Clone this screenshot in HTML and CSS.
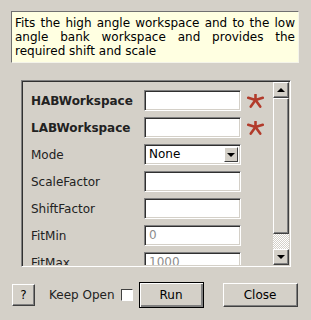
FILE: index.html
```html
<!DOCTYPE html>
<html lang="en">
<head>
    <meta charset="UTF-8">
    <title>Algorithm Dialog</title>
    <link rel="stylesheet" href="styles.css">
</head>
<body>

    <div class="desc">Fits the high angle workspace and to the low angle bank workspace and provides the required shift and scale</div>

    <div class="frame">
        <div class="props">
            <div class="row">
                <span class="label required">HABWorkspace</span>
                <div class="field"></div>
                <svg class="star" width="17" height="14" viewBox="0 0 17 14">
                    <g stroke="#b23b2b" stroke-width="2.6" stroke-linecap="round">
                        <line x1="8.5" y1="6" x2="8.5" y2="0.8"/>
                        <line x1="8.5" y1="6" x2="1.2" y2="3.8"/>
                        <line x1="8.5" y1="6" x2="15.8" y2="3.8"/>
                        <line x1="8.5" y1="6" x2="3.8" y2="12.6"/>
                        <line x1="8.5" y1="6" x2="13.2" y2="12.6"/>
                    </g>
                </svg>
            </div>
            <div class="row">
                <span class="label required">LABWorkspace</span>
                <div class="field"></div>
                <svg class="star" width="17" height="14" viewBox="0 0 17 14">
                    <g stroke="#b23b2b" stroke-width="2.6" stroke-linecap="round">
                        <line x1="8.5" y1="6" x2="8.5" y2="0.8"/>
                        <line x1="8.5" y1="6" x2="1.2" y2="3.8"/>
                        <line x1="8.5" y1="6" x2="15.8" y2="3.8"/>
                        <line x1="8.5" y1="6" x2="3.8" y2="12.6"/>
                        <line x1="8.5" y1="6" x2="13.2" y2="12.6"/>
                    </g>
                </svg>
            </div>
            <div class="row">
                <span class="label">Mode</span>
                <div class="field combo">
                    <span>None</span>
                    <span class="combo-btn"><span class="arrow-down"></span></span>
                </div>
            </div>
            <div class="row">
                <span class="label">ScaleFactor</span>
                <div class="field"></div>
            </div>
            <div class="row">
                <span class="label">ShiftFactor</span>
                <div class="field"></div>
            </div>
            <div class="row">
                <span class="label">FitMin</span>
                <div class="field disabled">0</div>
            </div>
            <div class="row">
                <span class="label">FitMax</span>
                <div class="field disabled">1000</div>
            </div>
            <div class="row">
                <span class="label">OutputWorkspace</span>
                <div class="field"></div>
            </div>
        </div>

        <div class="scrollbar">
            <div class="sb-btn"><span class="arrow-up"></span></div>
            <div class="sb-thumb"></div>
            <div class="sb-track"></div>
            <div class="sb-btn"><span class="arrow-down"></span></div>
        </div>
    </div>

    <div class="buttons">
        <div class="btn help">?</div>
        <span class="keep">Keep Open</span>
        <span class="check"></span>
        <div class="btn run">Run</div>
        <div class="btn close">Close</div>
    </div>

</body>
</html>
```

FILE: styles.css
```css
body {
    margin: 0;
    background-color: #d4d0c8;
    font-family: "DejaVu Sans", sans-serif;
    font-size: 12px;
    color: #000;
}

.desc {
    margin: 11px 12px 0 11px;
    padding: 4px 3px;
    height: 42px;
    line-height: 14px;
    background-color: #ffffe1;
    border: 1px solid;
    border-color: #707070 #f4f4ea #f4f4ea #707070;
    text-align: justify;
}

.frame {
    display: flex;
    margin: 17px 20px 0 21px;
    height: 183px;
    border-style: solid;
    border-width: 1px;
    border-color: #808080 #fff #fff #808080;
    box-shadow: inset 1px 1px #303030, inset -1px -1px #d4d0c8;
    padding: 1px;
}

.props {
    flex: 1;
    overflow: hidden;
    padding: 8px 0 0 8px;
}

.row {
    display: flex;
    align-items: center;
    height: 21px;
    margin-bottom: 6px;
}

.label {
    width: 113px;
    color: #222;
    white-space: nowrap;
}

.label.required {
    font-weight: bold;
}

.field {
    box-sizing: border-box;
    width: 97px;
    height: 21px;
    padding: 1px 4px 0;
    line-height: 17px;
    background-color: #fff;
    border-style: solid;
    border-width: 1px;
    border-color: #808080 #fff #fff #808080;
    box-shadow: inset 1px 1px #303030, inset -1px -1px #d4d0c8;
}

.field.disabled {
    color: #8c8c8c;
}

.combo {
    display: flex;
    justify-content: space-between;
    align-items: center;
    padding: 0 2px 0 4px;
}

.combo-btn {
    display: flex;
    align-items: center;
    justify-content: center;
    box-sizing: border-box;
    width: 14px;
    height: 15px;
    background-color: #d4d0c8;
    border: 1px solid;
    border-color: #fff #404040 #404040 #fff;
}

.arrow-down,
.arrow-up {
    width: 0;
    height: 0;
    border-left: 4px solid transparent;
    border-right: 4px solid transparent;
}

.arrow-down {
    border-top: 4px solid #000;
}

.arrow-up {
    border-bottom: 4px solid #000;
}

.star {
    margin-left: 6px;
    margin-top: 1px;
}

.scrollbar {
    display: flex;
    flex-direction: column;
    width: 16px;
}

.sb-btn,
.sb-thumb {
    box-sizing: border-box;
    background-color: #d4d0c8;
    border: 1px solid;
    border-color: #fff #404040 #404040 #fff;
    box-shadow: inset -1px -1px #808080;
}

.sb-btn {
    display: flex;
    align-items: center;
    justify-content: center;
    height: 16px;
}

.sb-thumb {
    height: 136px;
}

.sb-track {
    flex: 1;
    background-color: #eceae6;
    background-image: repeating-conic-gradient(#fff 0 25%, #d4d0c8 0 50%);
    background-size: 2px 2px;
}

.buttons {
    display: flex;
    align-items: center;
    margin: 15px 0 0 12px;
}

.btn {
    box-sizing: border-box;
    display: flex;
    align-items: center;
    justify-content: center;
    height: 24px;
    background-color: #d4d0c8;
    border: 1px solid;
    border-color: #fff #404040 #404040 #fff;
    box-shadow: inset -1px -1px #808080;
}

.help {
    width: 23px;
    height: 22px;
}

.keep {
    margin-left: 14px;
    color: #222;
}

.check {
    box-sizing: border-box;
    width: 12px;
    height: 12px;
    margin-left: 6px;
    background-color: #fff;
    border: 1px solid;
    border-color: #404040 #fff #fff #404040;
    box-shadow: 1px 1px #d4d0c8;
}

.run {
    width: 65px;
    height: 26px;
    margin-left: 6px;
    border-color: #000;
    box-shadow: inset 1px 1px #fff, inset -2px -2px #808080;
}

.close {
    width: 75px;
    margin-left: 19px;
}
```
